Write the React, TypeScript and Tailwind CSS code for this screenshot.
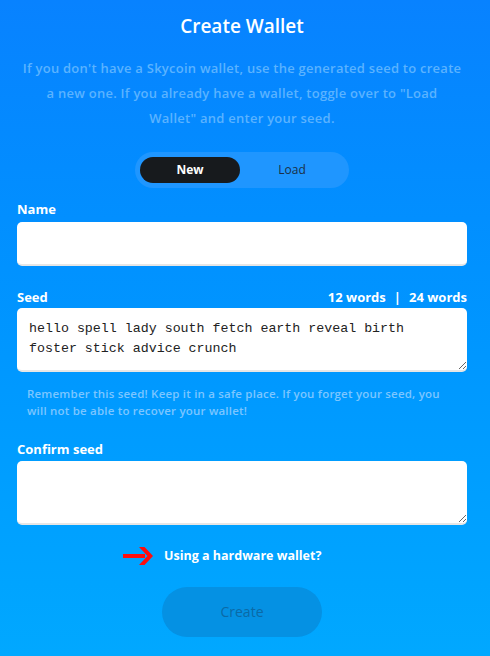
import React from 'react';

const label = 'text-[13px] font-bold text-white leading-[14px]';
const field = 'w-full rounded-[5px] bg-white border-b-2 border-[#e6e6e6] outline-none';

const App = () => {
  return (
    <div className="min-h-[656px] w-full bg-gradient-to-b from-[#0882ff] to-[#01a8ff] font-['Open_Sans',sans-serif] text-white">
      <div className="w-[450px] ml-[17px] pt-[13px]">
        {/* Heading */}
        <h1 className="text-center text-[19px] font-semibold leading-[26px]">Create Wallet</h1>
        <p className="mt-[17px] text-center text-[13px] font-semibold leading-[25px] tracking-[0.25px] text-[#5bb3ff]">
          If you don't have a Skycoin wallet, use the generated seed to create
          <br />
          a new one. If you already have a wallet, toggle over to "Load
          <br />
          Wallet" and enter your seed.
        </p>

        {/* Toggle */}
        <div className="mt-[21px] flex justify-center">
          <div className="flex h-[36px] w-[214px] items-center rounded-full bg-[#1f96ff] px-[5px]">
            <button className="h-[26px] w-[100px] rounded-full bg-[#171a1d] text-[12px] font-bold text-white">New</button>
            <button className="h-[26px] flex-1 text-[12px] text-[#1b2f45]">Load</button>
          </div>
        </div>

        {/* Name */}
        <div className="mt-[14px]">
          <div className={label}>Name</div>
          <input className={`${field} mt-[6px] h-[44px] px-3 text-[13px] text-black`} />
        </div>

        {/* Seed */}
        <div className="mt-[24px]">
          <div className="flex justify-between">
            <span className={label}>Seed</span>
            <span className={label}>
              12 words<span className="mx-[8px]">|</span>24 words
            </span>
          </div>
          <textarea
            className={`${field} mt-[4px] block h-[64px] resize-y pl-[12px] pr-[24px] pt-[11px] font-['Liberation_Mono',monospace] text-[13.3px] leading-[20px] text-[#222]`}
            defaultValue="hello spell lady south fetch earth reveal birth foster stick advice crunch"
          />
          <p className="mt-[13px] w-[430px] pl-[10px] text-[11.5px] font-semibold leading-[17px] tracking-[0.2px] text-[#7cc6ff]">
            Remember this seed! Keep it in a safe place. If you forget your seed, you will not be able to recover your wallet!
          </p>
        </div>

        {/* Confirm seed */}
        <div className="mt-[23px]">
          <div className={label}>Confirm seed</div>
          <textarea className={`${field} mt-[5px] block h-[64px] resize-y px-[12px] pt-[11px] font-['Liberation_Mono',monospace] text-[13px]`} />
        </div>

        {/* Hardware wallet */}
        <div className="mt-[22px] flex items-center gap-[11px] pl-[106px]">
          <svg width="30" height="18" viewBox="0 0 30 18">
            <path d="M0 7h22v4H0z" fill="#ff0d0d" />
            <path d="M16 0h5.5l8.5 9-8.5 9H16l8.5-9z" fill="#ff0d0d" />
          </svg>
          <span className="text-[12.5px] font-bold">Using a hardware wallet?</span>
        </div>

        {/* Create */}
        <div className="mt-[21px] flex justify-center">
          <button className="h-[50px] w-[160px] rounded-full bg-[#0591e3] text-[14px] text-[#0b6aa6]">Create</button>
        </div>
      </div>
    </div>
  );
};

export default App;
